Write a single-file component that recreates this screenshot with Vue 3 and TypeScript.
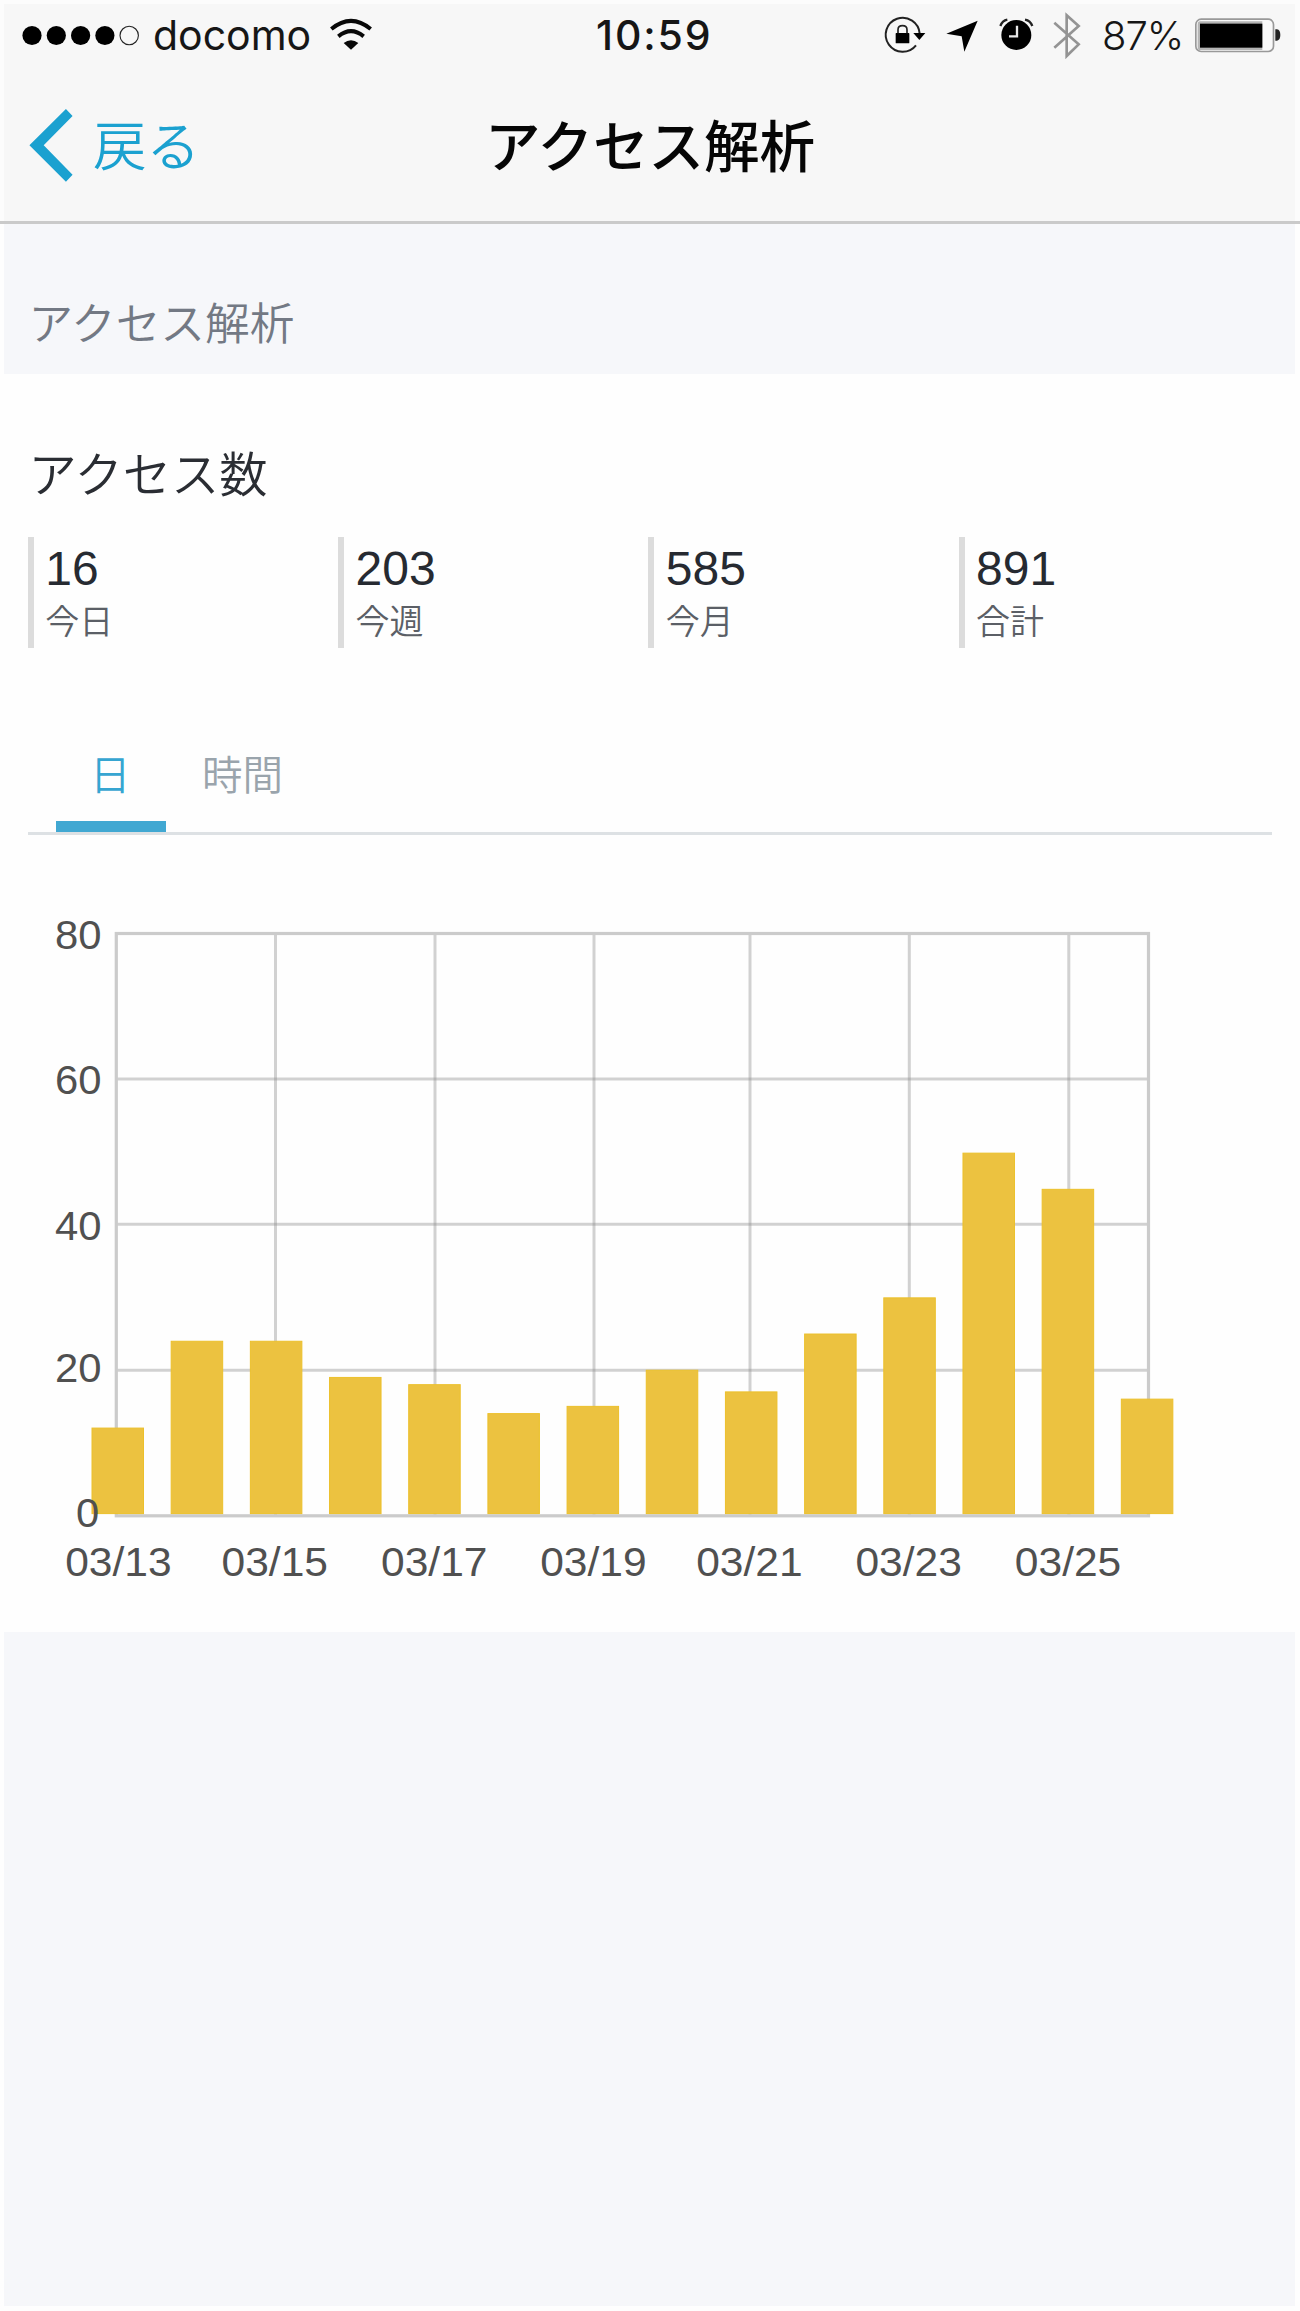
<script setup lang="ts">
interface Stat {
  value: number
  label: string
}

interface Label {
  text: string
  x: number
  y: number
  width: number
}

const stats: Stat[] = [
  { value: 16, label: '今日' },
  { value: 203, label: '今週' },
  { value: 585, label: '今月' },
  { value: 891, label: '合計' },
]

const visits: number[] = [12, 24, 24, 19, 18, 14, 15, 20, 17, 25, 30, 50, 45, 16]
const bars = visits.map((value, i) => ({
  x: 91.5 + i * 79.18,
  y: 636.4 - value * 7.235,
  height: value * 7.235 - 0.8,
}))

const columns: number[] = [275.5, 435, 594, 750, 909.3, 1068.8]
const rows: number[] = [201, 346.3, 492.3]

const yLabels: Label[] = [
  { text: '80', x: 55, y: 70.5, width: 46.5 },
  { text: '60', x: 55, y: 216, width: 46.5 },
  { text: '40', x: 55, y: 361.5, width: 46.5 },
  { text: '20', x: 55, y: 504.2, width: 46.5 },
  { text: '0', x: 76, y: 649.2, width: 23.2 },
]

const days = ['03/13', '03/15', '03/17', '03/19', '03/21', '03/23', '03/25']
const starts = [65.2, 221.5, 381, 540.2, 696.2, 855.4, 1014.8]
const xLabels: Label[] = days.map((text, i) => ({ text, x: starts[i], y: 698, width: 106.5 }))
</script>

<template>
  <div class="page">
    <header class="top">
      <div class="status">
        <svg class="dots" viewBox="0 0 145 80">
          <circle v-for="n in 4" :key="n" :cx="7.7 + n * 24.3" cy="35.5" r="9.6" />
          <circle cx="129.2" cy="35.5" r="9.2" fill="none" stroke="#222" stroke-width="1.1" />
        </svg>
        <span class="carrier">docomo</span>
        <svg class="wifi" viewBox="960 0 180 240">
          <g fill="none" stroke="#080808" stroke-width="12">
            <path d="M994 87Q1053 38 1112 87" />
            <path d="M1015 109Q1053 78 1091 109" />
          </g>
          <path d="M1031 129Q1053 112 1075 129L1053 149Z" fill="#080808" />
        </svg>
        <span class="time">10:59</span>
        <svg class="lock" viewBox="0 0 198 240">
          <path d="M149 101A51 51 0 1 0 138 136" fill="none" stroke="#222" stroke-width="6" />
          <path d="M130 99H166L148 120Z" />
          <rect x="77" y="99" width="41" height="31" rx="2" />
          <path d="M84 100V89Q84 77 97.500 77Q111 77 111 89V100" fill="none" stroke="#222" stroke-width="5" />
        </svg>
        <svg class="location" viewBox="198 0 162 240">
          <path d="M323 62L283 155L275 109L229 101Z" />
        </svg>
        <svg class="alarm" viewBox="360 0 162 240">
          <circle cx="439" cy="105" r="45" />
          <path d="M391 78Q397 62 412 59M465 59Q481 62 487 78" fill="none" stroke="#222" stroke-width="7" />
          <path d="M441 77V109H417" fill="none" stroke="#e8e8e8" stroke-width="7" />
        </svg>
        <svg class="bluetooth" viewBox="522 0 150 240">
          <path d="M553 68L626 133L590 168V46L626 78L553 143" fill="none" stroke="#949494" stroke-width="8" />
        </svg>
        <span class="percent">87%</span>
        <svg class="battery" viewBox="960 0 315 240">
          <rect x="977.500" y="57.500" width="233" height="97" rx="16" fill="#f9f9f9" stroke="#999" stroke-width="5" />
          <path d="M990 64H1177V150H990Q983 150 983 140V74Q983 64 990 64Z" fill="#b5b5b5" />
          <rect x="990" y="71" width="187" height="72" fill="#000" />
          <path d="M1216 88H1221Q1231 90 1231 105Q1231 120 1221 122H1216Z" fill="#222" />
        </svg>
      </div>
      <nav class="nav">
        <a class="back">
          <svg class="chevron" viewBox="84 324 138 226">
            <path d="M88 436L198 327L218 348L131 436L218 525L198 546Z" fill="#1ba1d0" />
          </svg>
          <span>戻る</span>
        </a>
        <h1>アクセス解析</h1>
        <span class="side"></span>
      </nav>
    </header>

    <h2 class="section-title">アクセス解析</h2>

    <main class="panel">
      <h3>アクセス数</h3>
      <div class="stats">
        <div v-for="s in stats" :key="s.label" class="stat">
          <div class="value">{{ s.value }}</div>
          <div class="label">{{ s.label }}</div>
        </div>
      </div>
      <div class="tabs">
        <div class="tab active">日</div>
        <div class="tab">時間</div>
      </div>
      <svg class="chart" viewBox="0 0 1300 754">
        <g stroke="#8a8a8a" stroke-opacity="0.38" stroke-width="3">
          <line v-for="x in columns" :key="'c' + x" :x1="x" :x2="x" y1="55.5" y2="637.5" />
          <line v-for="y in rows" :key="'r' + y" x1="116.3" x2="1148.5" :y1="y" :y2="y" />
        </g>
        <rect x="116.3" y="55.5" width="1032.2" height="582.3" fill="none" stroke="#cbcbcb" stroke-width="3.2" />
        <rect
          v-for="b in bars"
          :key="b.x"
          :x="b.x + 0.5"
          :y="b.y + 0.5"
          width="51.5"
          :height="b.height - 0.5"
          fill="#ecc240"
          stroke="#ecc02b"
          stroke-width="1"
        />
        <g class="axis-text">
          <text
            v-for="l in yLabels"
            :key="l.text"
            :x="l.x"
            :y="l.y"
            :textLength="l.width"
            lengthAdjust="spacingAndGlyphs"
          >{{ l.text }}</text>
          <text
            v-for="l in xLabels"
            :key="l.text"
            :x="l.x"
            :y="l.y"
            :textLength="l.width"
            lengthAdjust="spacingAndGlyphs"
          >{{ l.text }}</text>
        </g>
      </svg>
    </main>

    <div class="rest"></div>
  </div>
</template>

<style>
body {
  margin: 0;
  background: #fefefe;
}
</style>

<style scoped>
.page {
  width: 1300px;
  height: 2311px;
  box-sizing: border-box;
  padding-bottom: 5px;
  display: flex;
  flex-direction: column;
  overflow: hidden;
  background: #fefefe;
  font-family: "Noto Sans CJK JP", sans-serif;
}

h1,
h2,
h3 {
  margin: 0;
  font-weight: 400;
}

svg {
  display: block;
  flex: none;
}

.top {
  height: 224px;
  flex: none;
  box-sizing: border-box;
  border-bottom: 3px solid #cacaca;
  background: linear-gradient(#f7f7f7, #f7f7f7) 4px 4px / 1291px 217px no-repeat, #fcfcfc;
}

.status {
  display: flex;
  height: 80px;
  font-family: Inter, sans-serif;
  font-size: 41px;
  line-height: 71px;
  color: #161616;
  white-space: nowrap;
}

.dots {
  width: 145px;
  height: 80px;
}

.carrier {
  width: 167px;
  margin-left: 8px;
}

.wifi {
  width: 60px;
  height: 80px;
}

.time {
  width: 274px;
  margin-left: 216px;
  font-weight: 500;
  letter-spacing: 1.9px;
}

.lock {
  width: 66px;
  height: 80px;
}

.location,
.alarm {
  width: 54px;
  height: 80px;
}

.bluetooth {
  width: 50px;
  height: 80px;
}

.percent {
  width: 88px;
  margin-left: 8px;
  font-size: 40px;
  font-weight: 350;
  letter-spacing: -1px;
}

.battery {
  width: 105px;
  height: 80px;
}

.nav {
  display: flex;
  height: 126px;
  align-items: center;
}

.back {
  display: flex;
  align-items: center;
  width: 358px;
  padding-left: 28px;
  font-size: 53.500px;
  line-height: 126px;
  color: #1ba1d0;
}

.back span {
  margin-left: 19px;
  font-weight: 350;
}

.chevron {
  width: 46px;
  height: 75px;
  margin-top: 5px;
}

.nav h1 {
  flex: 1;
  text-align: center;
  font-size: 55.500px;
  line-height: 126px;
  font-weight: 500;
  color: #060606;
}

.side {
  width: 386px;
}

.section-title {
  flex: none;
  height: 150px;
  margin: 0 5px 0 4px;
  padding: 20px 0 0 24.500px;
  box-sizing: border-box;
  background: #f6f7fa;
  font-size: 44.700px;
  line-height: 153px;
  font-weight: 350;
  color: #737984;
}

.panel {
  flex: none;
  height: 1258px;
}

.panel h3 {
  height: 163px;
  padding: 57px 0 0 28.500px;
  box-sizing: border-box;
  font-size: 48.300px;
  line-height: 80px;
  font-weight: 350;
  color: #2a2d33;
}

.stats {
  display: flex;
  margin-left: 27.700px;
}

.stat {
  width: 310.3px;
  height: 111px;
  box-sizing: border-box;
  border-left: 6px solid #dcdcdc;
  padding-left: 11.500px;
}

.value {
  height: 62px;
  font-family: "Liberation Sans", sans-serif;
  font-size: 48px;
  line-height: 64px;
  color: #262a31;
}

.label {
  font-size: 34px;
  line-height: 41px;
  font-weight: 350;
  color: #5b5f66;
}

.tabs {
  display: flex;
  height: 187px;
  margin: 0 28px;
  padding: 66px 0 0 28px;
  box-sizing: border-box;
  border-bottom: 3px solid #dde1e4;
  font-size: 40.500px;
  line-height: 117px;
  font-weight: 350;
  color: #9aa4ac;
}

.tab {
  height: 118px;
  padding: 0 35px;
  box-sizing: border-box;
}

.active {
  width: 110px;
  padding: 0 34px;
  margin-right: 1px;
  border-bottom: 11px solid #41a8d2;
  color: #36a5d1;
}

.chart {
  width: 1300px;
  height: 754px;
  margin-top: 43px;
}

.axis-text {
  font-family: "Liberation Sans", sans-serif;
  font-size: 40px;
  fill: #505050;
}

.rest {
  flex: 1;
  margin: 0 5px 0 4px;
  background: #f6f7fa;
}
</style>
